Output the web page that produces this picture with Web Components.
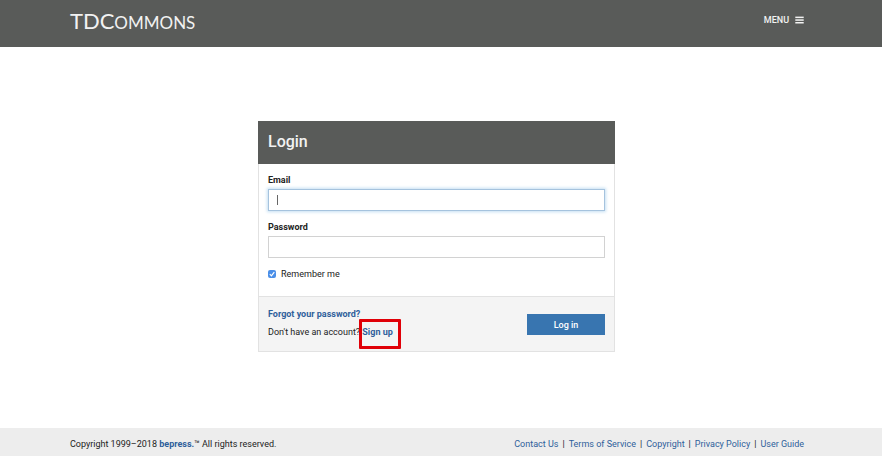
<!DOCTYPE html>
<html lang="en">
<head>
<meta charset="utf-8">
<meta name="viewport" content="width=device-width, initial-scale=1">
<title>TDCommons - Login</title>
<style>
  body {
    --clr-bar: #595b59;
    --clr-link: #2f5f9b;
    --clr-accent: #3875b0;
    --clr-text: #222;
    margin: 0;
    min-height: 100vh;
    display: flex;
    flex-direction: column;
    background: #fff;
    color: var(--clr-text);
    font: 9px/12px Roboto, "Liberation Sans", sans-serif;
  }

  main {
    flex: 1;
    display: flex;
    align-items: center;
    justify-content: center;
    padding: 16px 25px 18px 16px;
  }
</style>
</head>
<body>

<td-header>TDC<span>ommons</span></td-header>
<main>
  <td-login heading="Login"></td-login>
</main>
<td-footer>
  <a href="#contact">Contact Us</a>
  <a href="#terms">Terms of Service</a>
  <a href="#copyright">Copyright</a>
  <a href="#privacy">Privacy Policy</a>
  <a href="#guide">User Guide</a>
</td-footer>

<template id="header-template">
  <style>
    :host {
      display: block;
      background: var(--clr-bar);
      color: #f2f2f2;
      padding-right: 8px;
    }

    .inner {
      display: flex;
      justify-content: space-between;
      align-items: center;
      box-sizing: border-box;
      width: 84%;
      max-width: 1100px;
      height: 47px;
      padding-bottom: 8px;
      margin: 0 auto;
    }

    .logo {
      color: inherit;
      text-decoration: none;
      font: 22px/24px Lato, sans-serif;
      padding-top: 4px;
    }

    ::slotted(span) {
      font-size: 17px;
      text-transform: uppercase;
    }

    button {
      display: flex;
      align-items: center;
      gap: 6px;
      padding: 0;
      border: 0;
      background: none;
      color: inherit;
      font: 500 9px/12px Roboto, sans-serif;
      text-transform: uppercase;
      cursor: pointer;
    }
  </style>
  <header class="inner">
    <a class="logo" href="#home"><slot></slot></a>
    <button type="button">
      Menu
      <svg width="9" height="8" viewBox="0 0 9 8" fill="currentColor" aria-hidden="true">
        <rect width="8.4" height="1.5" x="0.3" y="0.6"/>
        <rect width="8.4" height="1.5" x="0.3" y="3.3"/>
        <rect width="8.4" height="1.5" x="0.3" y="6"/>
      </svg>
    </button>
  </header>
</template>

<template id="field-template">
  <style>
    :host {
      display: block;
    }

    label {
      display: block;
      margin-bottom: 3px;
      font-weight: 700;
    }

    input {
      display: block;
      box-sizing: border-box;
      width: 100%;
      height: 22px;
      padding: 0 8px;
      border: 1px solid #d2d2d2;
      border-radius: 0;
      outline: 0;
      background: #fff;
      color: inherit;
      font: inherit;
    }

    :host([active]) input {
      border-color: #a5c3de;
      box-shadow: 0 0 3px 1px #c5dff3;
      caret-color: transparent;
      background: linear-gradient(#666, #666) 8px center / 1px 10px no-repeat #fff;
    }
  </style>
  <label for="input"></label>
  <input id="input">
</template>

<template id="login-template">
  <style>
    :host {
      display: block;
      width: 100%;
      max-width: 357px;
    }

    form {
      border: 1px solid #e2e2e2;
      border-top: 0;
    }

    h1 {
      margin: 0 -1px;
      padding: 11px 10px 12px;
      background: var(--clr-bar);
      color: #f2f2f2;
      font-size: 16px;
      line-height: 20px;
      font-weight: 500;
    }

    .fields {
      display: flex;
      flex-direction: column;
      gap: 10px;
      padding: 10px 9px 16px;
    }

    .remember {
      display: flex;
      align-items: center;
      gap: 5px;
    }

    .remember input {
      appearance: none;
      width: 8px;
      height: 8px;
      margin: 0;
      border-radius: 2px;
      background: #4b8fe8;
    }

    .remember .box {
      display: grid;
    }

    .box > * {
      grid-area: 1 / 1;
    }

    .box svg {
      pointer-events: none;
      visibility: hidden;
    }

    input:checked + svg {
      visibility: visible;
    }

    .actions {
      display: flex;
      justify-content: space-between;
      align-items: flex-end;
      padding: 11px 9px 13px;
      border-top: 1px solid #e2e2e2;
      background: #f4f4f4;
    }

    p {
      margin: 0;
    }

    p + p {
      margin-top: 6px;
    }

    a {
      color: var(--clr-link);
      font-weight: 700;
      text-decoration: none;
    }

    .signup {
      position: relative;
    }

    .signup::after {
      content: '';
      position: absolute;
      inset: -8px -8px -12px -3px;
      border: 3px solid #e00008;
      border-radius: 1px;
      pointer-events: none;
    }

    button {
      width: 78px;
      height: 21px;
      margin-bottom: 3px;
      padding: 0;
      border: 0;
      background: var(--clr-accent);
      color: #fff;
      font: 500 9px/12px Roboto, sans-serif;
      cursor: pointer;
    }
  </style>
  <form>
    <h1></h1>
    <div class="fields">
      <td-field label="Email" type="email" active></td-field>
      <td-field label="Password" type="password"></td-field>
      <label class="remember">
        <span class="box">
          <input type="checkbox" checked>
          <svg width="8" height="8" viewBox="0 0 8 8" fill="none" stroke="#fff" stroke-width="1.2" aria-hidden="true">
            <path d="M1.8 4.2 3.4 5.8 6.3 2.1"/>
          </svg>
        </span>
        Remember me
      </label>
    </div>
    <div class="actions">
      <div>
        <p><a href="#forgot">Forgot your password?</a></p>
        <p>Don't have an account? <a class="signup" href="#signup">Sign up</a></p>
      </div>
      <button type="button">Log in</button>
    </div>
  </form>
</template>

<template id="footer-template">
  <style>
    :host {
      display: block;
      padding-right: 8px;
      background: #ededed;
    }

    .inner {
      display: flex;
      flex-wrap: wrap;
      justify-content: space-between;
      width: 84%;
      max-width: 1100px;
      margin: 0 auto;
      padding: 10px 0 6px;
    }

    a, ::slotted(a) {
      color: var(--clr-link);
      text-decoration: none;
    }

    b {
      font-weight: 700;
    }

    nav {
      display: flex;
    }

    ::slotted(a:not(:first-child))::before {
      content: '|';
      margin: 0 4px;
      color: var(--clr-text);
    }
  </style>
  <footer class="inner">
    <span>Copyright 1999–2018 <a href="#bepress"><b>bepress.</b></a>™ All rights reserved.</span>
    <nav><slot></slot></nav>
  </footer>
</template>

<script>
function stamp(host, id) {
  host.attachShadow({ mode: 'open' });
  host.shadowRoot.appendChild(document.getElementById(id).content.cloneNode(true));
}

class Header extends HTMLElement {

  constructor() {
    super();
    stamp(this, 'header-template');
  }

}

class Field extends HTMLElement {

  constructor() {
    super();
    stamp(this, 'field-template');
  }

  connectedCallback() {
    this.shadowRoot.querySelector('label').textContent = this.getAttribute('label');
    this.shadowRoot.querySelector('input').type = this.getAttribute('type');
  }

}

class Login extends HTMLElement {

  constructor() {
    super();
    stamp(this, 'login-template');
  }

  connectedCallback() {
    this.shadowRoot.querySelector('h1').textContent = this.getAttribute('heading');
  }

}

class Footer extends HTMLElement {

  constructor() {
    super();
    stamp(this, 'footer-template');
  }

}

customElements.define('td-header', Header);
customElements.define('td-field', Field);
customElements.define('td-login', Login);
customElements.define('td-footer', Footer);
</script>
</body>
</html>
